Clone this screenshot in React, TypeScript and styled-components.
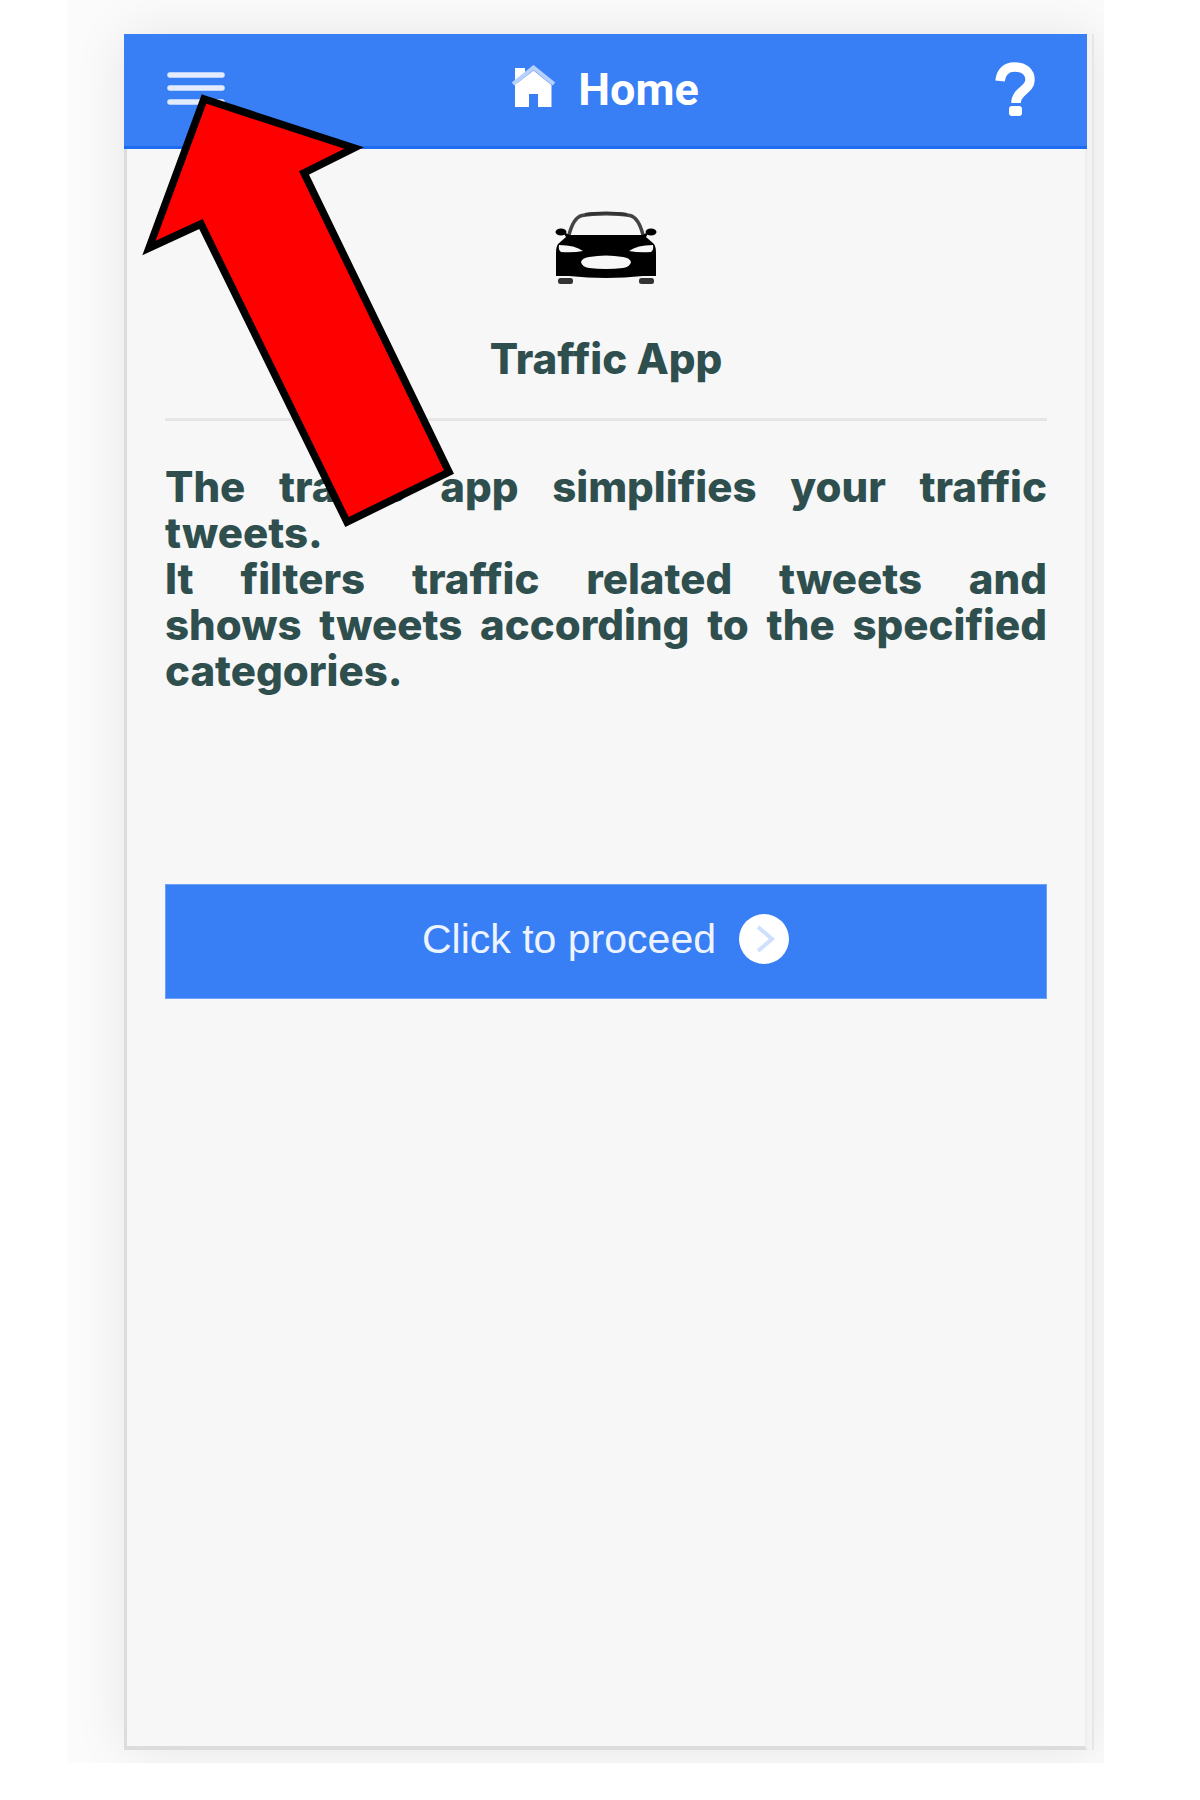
import React from 'react';
import styled, { createGlobalStyle } from 'styled-components';

const blue = '#387ef5';
const ink = '#2f4f4f';

const GlobalStyle = createGlobalStyle`
  * { box-sizing: border-box; }
  body { margin: 0; background: #fff; }
`;

const Stage = styled.div`
  margin: 0 96px 37px 67px;
  padding: 34px 10px 13px 57px;
  background: #fbfbfb;
  overflow: hidden;
`;

const Phone = styled.div`
  position: relative;
  display: flex;
  flex-direction: column;
  min-height: calc(100vh - 84px);
  padding-right: 5px;
  background: #f3f3f3;
  border-right: 2px solid #e6e6e6;
  box-shadow: 0 0 50px rgba(0, 0, 0, 0.09);
`;

const Header = styled.header`
  display: grid;
  grid-template-columns: 1fr auto 1fr;
  align-items: center;
  height: 115px;
  padding: 0 43px 4px;
  background: ${blue};
  border-bottom: 3px solid #1c6cf4;
`;

const IconButton = styled.button<{ $side: 'start' | 'end' }>`
  display: flex;
  justify-self: ${(p) => p.$side};
  padding: 0;
  border: 0;
  background: none;
  cursor: pointer;
`;

const Title = styled.h1`
  display: flex;
  align-items: center;
  gap: 22px;
  margin: 0;
  color: #fff;
  font: 700 45px/52px Roboto, sans-serif;

  svg {
    margin-bottom: 4px;
  }
`;

const Label = styled.span`
  padding-top: 4px;
`;

const Screen = styled.main`
  flex: 1;
  display: flex;
  flex-direction: column;
  padding: 62px 38px 0;
  background: #f7f7f7;
  border: solid #dcdcdc;
  border-width: 0 2px 4px 3px;
  border-right-color: #eee;
  color: ${ink};
  font-family: Inter, sans-serif;
`;

const Brand = styled.div`
  display: flex;
  flex-direction: column;
  align-items: center;
  gap: 50px;
  padding-bottom: 35px;
  border-bottom: 3px solid #e6e6e6;
`;

const AppName = styled.h2`
  margin: 0;
  font-size: 42px;
  line-height: 48px;
  font-weight: 800;
`;

const Description = styled.p`
  margin: 43px 0 0;
  font-size: 42px;
  line-height: 46px;
  font-weight: 800;
  text-align: justify;
`;

const ProceedButton = styled.button`
  display: flex;
  align-items: center;
  justify-content: center;
  gap: 22px;
  width: 100%;
  height: 115px;
  margin-top: 190px;
  padding: 0 0 6px;
  border: 1px solid #6ea2f8;
  background: ${blue};
  color: #eef4ff;
  font: 400 41px/48px "Liberation Sans", Arial, sans-serif;
  cursor: pointer;
`;

const Pointer = styled.svg`
  position: absolute;
  top: 46px;
  left: 10px;
  pointer-events: none;
`;

const MenuIcon = () => (
  <svg width="58" height="34" viewBox="3 0 58 34" aria-hidden="true">
    <g stroke="#e3ecfe" strokeWidth="5.5" strokeLinecap="round">
      <path d="M6 4H58M6 17H58M6 31H58" />
    </g>
  </svg>
);

const HomeIcon = () => (
  <svg width="44" height="42" viewBox="0 0 44 42" aria-hidden="true">
    <path d="M3 3H13V11L3 20Z" fill="#fff" />
    <path d="M1 19L21.500 2.500L42 19" fill="none" stroke="#b7d0fc" strokeWidth="4" />
    <path d="M3 20L21.500 5.500L39.500 20V42H26V29H17V42H3Z" fill="#fff" />
  </svg>
);

const HelpIcon = () => (
  <svg width="50" height="60" viewBox="5 0 50 60" aria-hidden="true">
    <path
      d="M11 23C12 14 17 9 25.500 9C35 9 41 14 41 22C41 32 27 33 27 45"
      fill="none"
      stroke="#fff"
      strokeWidth="9.500"
    />
    <rect x="20" y="48" width="13" height="10" rx="3" fill="#fff" />
  </svg>
);

const CarIcon = () => (
  <svg width="102" height="74" viewBox="0 0 102 74" aria-hidden="true">
    <path d="M14 24C17 12 21 6 27 4.500C40 2 62 2 75 4.500C81 6 85 12 88 24" fill="none" stroke="#444" strokeWidth="3.500" />
    <path d="M30 3.500C42 1.500 60 1.500 72 3.500" fill="none" stroke="#333" strokeWidth="3" />
    <ellipse cx="6" cy="21" rx="5.500" ry="3.500" />
    <ellipse cx="96" cy="21" rx="5.500" ry="3.500" />
    <path d="M8 21L15 24H87L94 21L91 26L99 33Q101 36 101 42V65H88Q51 69 14 65H1V42Q1 36 3 33L11 26Z" />
    <path d="M4 34Q20 34 28 40Q18 42 6 41Q3 39 4 34ZM98 34Q82 34 74 40Q84 42 96 41Q99 39 98 34Z" fill="#f7f7f7" />
    <path d="M26 51Q27 47 34 46Q51 43 68 46Q75 47 76 51Q75 56 68 57Q51 59 34 57Q27 56 26 51Z" fill="#f7f7f7" />
    <rect x="3" y="67" width="15" height="6" rx="2.500" fill="#333" />
    <rect x="84" y="67" width="15" height="6" rx="2.500" fill="#333" />
  </svg>
);

const ProceedIcon = () => (
  <svg width="52" height="52" viewBox="0 0 52 52" aria-hidden="true">
    <circle cx="26" cy="26" r="25" fill="#fff" />
    <path d="M20 14L34 26L20 38" fill="none" stroke="#cfe0fd" strokeWidth="4" />
  </svg>
);

export default function App() {
  return (
    <>
      <GlobalStyle />
      <Stage>
        <Phone>
          <Header>
            <IconButton type="button" $side="start" aria-label="Menu">
              <MenuIcon />
            </IconButton>
            <Title>
              <HomeIcon />
              <Label>Home</Label>
            </Title>
            <IconButton type="button" $side="end" aria-label="Help">
              <HelpIcon />
            </IconButton>
          </Header>
          <Screen>
            <Brand>
              <CarIcon />
              <AppName>Traffic App</AppName>
            </Brand>
            <Description>
              The traffic app simplifies your traffic tweets.
              <br />
              It filters traffic related tweets and shows&nbsp;tweets according to the specified categories.
            </Description>
            <ProceedButton type="button">
              Click to proceed
              <ProceedIcon />
            </ProceedButton>
          </Screen>
          <Pointer width="330" height="452" viewBox="134 80 330 452" aria-hidden="true">
            <path
              d="M204 99L354 148L304 173L449 472L347 522L201 224L149 248Z"
              fill="#f00"
              stroke="#000"
              strokeWidth="7.500"
              strokeMiterlimit="10"
            />
          </Pointer>
        </Phone>
      </Stage>
    </>
  );
}
